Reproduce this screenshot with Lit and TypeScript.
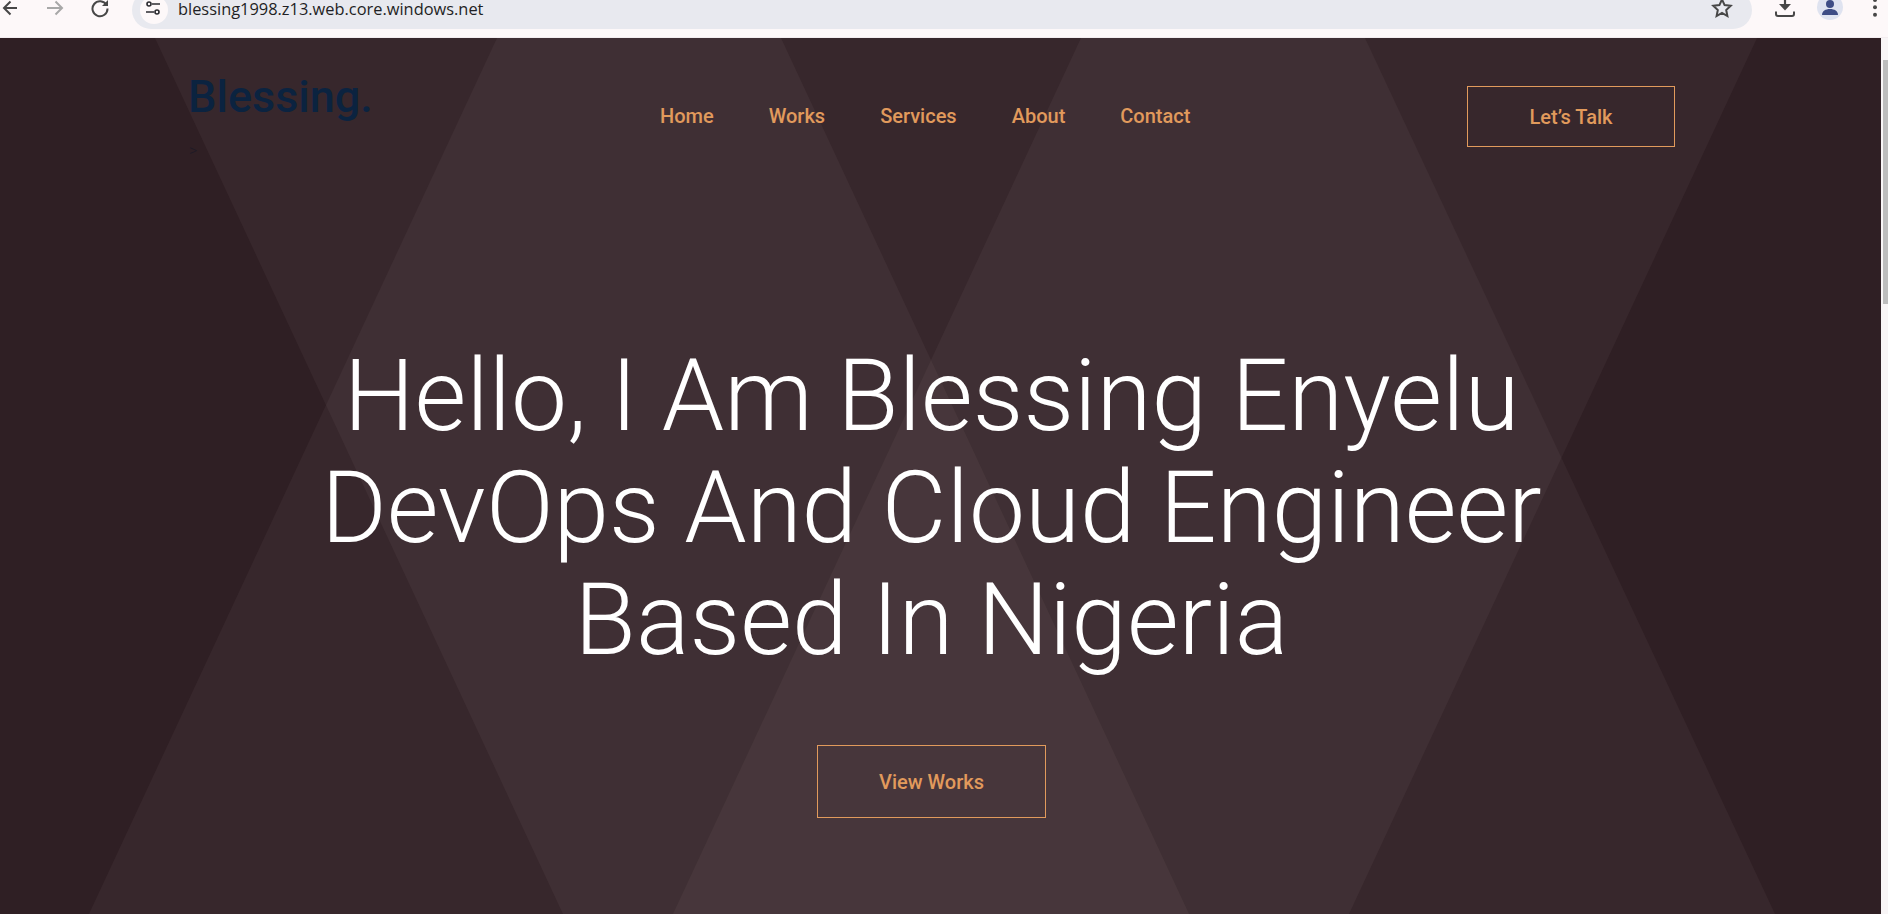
import { LitElement, html, css, svg } from 'lit'
import { customElement } from 'lit/decorators.js'

const NAV = ['Home', 'Works', 'Services', 'About', 'Contact']

@customElement('app-root')
export class AppRoot extends LitElement {
  static styles = css`
    :host {
      display: block;
      height: 914px;
      overflow: hidden;
      font-family: Roboto, 'Liberation Sans', sans-serif;
      background: #fdf8f9;
    }

    /* browser chrome */
    .chrome {
      height: 38px;
      display: flex;
      align-items: flex-start;
      overflow: hidden;
      box-sizing: border-box;
      border-bottom: 1px solid #f3edf0;
    }
    .tool { flex: none; display: block; margin-top: -4px; }
    .tool.forward { margin-left: 23px; }
    .tool.reload { margin-left: 21px; }
    .omnibox {
      flex: none;
      width: 1620px;
      height: 38px;
      margin: -9px 0 0 20px;
      background: #e8e9ef;
      border-radius: 19px;
      display: flex;
      align-items: center;
      padding: 0 18px 0 8px;
      box-sizing: border-box;
    }
    .tune {
      flex: none;
      width: 28px;
      height: 28px;
      border-radius: 50%;
      background: #fdf8f9;
      display: flex;
      align-items: center;
      justify-content: center;
    }
    .tune svg { margin: -4px 2px 0 0; }
    .url {
      margin: -4px 0 0 10px;
      flex: 1;
      font: 16.4px/15px 'Open Sans', sans-serif;
      color: #1f1f24;
    }
    .star { flex: none; margin-top: -4px; }
    .actions { display: flex; align-items: flex-start; }
    .tool.download { margin-left: 21px; }
    .avatar {
      flex: none;
      width: 26px;
      height: 26px;
      margin: -6px 0 0 20px;
      border-radius: 50%;
      background: #dfe3f0;
      display: block;
    }
    .tool.dots { margin: -6px 0 0 29px; }

    /* page */
    .viewport { display: flex; height: 876px; }
    .page {
      position: relative;
      flex: 1;
      min-width: 0;
      background: #2f1f24;
      overflow: hidden;
    }
    .shapes { position: absolute; inset: 0; width: 100%; height: 100%; }
    .shapes polygon { fill: rgba(255, 235, 240, 0.042); }
    .content {
      position: relative;
      padding: 48px 206px 0 189px;
      display: flex;
      flex-direction: column;
    }
    .bar { display: flex; align-items: flex-start; }
    .brand { width: 471px; flex: none; }
    .logo {
      font-size: 45px;
      font-weight: 500;
      line-height: 52px;
      color: #0b2340;
      margin: -15px 0 0 -1px;
    }
    .stray {
      font-size: 16px;
      font-weight: 300;
      line-height: 18px;
      color: #1e1a26;
      margin-top: 19px;
    }
    nav { display: flex; gap: 55px; margin-top: 17px; }
    nav a {
      font-size: 20px;
      font-weight: 500;
      line-height: 26px;
      color: #e19a5c;
    }
    .btn {
      box-sizing: border-box;
      display: flex;
      align-items: center;
      justify-content: center;
      border: 1px solid #e19a5c;
      color: #e19a5c;
      font-size: 20px;
      font-weight: 500;
    }
    .talk { width: 208px; height: 61px; margin-left: auto; }
    .hero {
      display: flex;
      flex-direction: column;
      align-items: center;
      margin-top: 180px;
      padding-right: 1px;
    }
    h1 {
      margin: 0;
      font-size: 100px;
      font-weight: 300;
      line-height: 112px;
      color: #fff;
      text-align: center;
    }
    .view { width: 229px; height: 73px; margin-top: 69px; }

    /* scrollbar */
    .scroll { flex: none; width: 7px; background: #f8f5f6; }
    .thumb { margin: 22px 0 0 2px; height: 244px; background: #bdbdbd; }
  `

  private icon(cls: string, w: number, body: unknown) {
    return html`<svg class="tool ${cls}" width=${w} height="24" viewBox="0 0 ${w} 24" fill="none">${body}</svg>`
  }

  render() {
    return html`
      <div class="chrome">
        ${this.icon('back', 20, svg`<path d="M17 12H4M10.500 5.500 4 12l6.500 6.500" stroke="#474747" stroke-width="2"/>`)}
        ${this.icon('forward', 24, svg`<path d="M4 12h15M12.500 5.500 19 12l-6.500 6.500" stroke="#a8a8a8" stroke-width="2"/>`)}
        ${this.icon('reload', 24, svg`<path d="M18.500 9A7.500 7.500 0 1 0 19.500 12.500" stroke="#474747" stroke-width="2"/><path d="M20 4v6h-6z" fill="#474747"/>`)}
        <div class="omnibox">
          <span class="tune">
            <svg width="16" height="16" viewBox="0 0 16 16" fill="none" stroke="#2b2b30" stroke-width="1.6">
              <circle cx="4" cy="4" r="2"/><path d="M7 4h8M1 12h8"/><circle cx="12" cy="12" r="2"/>
            </svg>
          </span>
          <span class="url">blessing1998.z13.web.core.windows.net</span>
          <svg class="star" width="24" height="24" viewBox="0 0 24 24" fill="none" stroke="#474747" stroke-width="2">
            <path d="m12 3.500 2.600 5.600 6.100.7-4.500 4.200 1.200 6L12 17l-5.400 3 1.200-6-4.500-4.200 6.100-.7z"/>
          </svg>
        </div>
        <div class="actions">
          ${this.icon('download', 24, svg`
            <path d="M12 0v12" stroke="#474747" stroke-width="2.200"/>
            <path d="M6 8h12l-6 6.500z" fill="#474747"/>
            <path d="M3 15.500v2.500a2 2 0 0 0 2 2h14a2 2 0 0 0 2-2v-2.500" stroke="#474747" stroke-width="2"/>`)}
          <svg class="avatar" viewBox="0 0 26 26">
            <circle cx="13" cy="10" r="4" fill="#3f4d85"/>
            <path d="M5 21c0-4 3.500-6 8-6s8 2 8 6z" fill="#3f4d85"/>
          </svg>
          <svg class="tool dots" width="6" height="24" viewBox="0 0 6 24" fill="#474747">
            <circle cx="3" cy="6" r="2"/><circle cx="3" cy="13.300" r="2"/><circle cx="3" cy="20.700" r="2"/>
          </svg>
        </div>
      </div>
      <div class="viewport">
        <main class="page">
          <svg class="shapes" viewBox="0 0 1881 876" preserveAspectRatio="none">
            <polygon points="155,0 781,0 1189,876 563,876" />
            <polygon points="1081,0 1757,0 1349,876 673,876" />
            <polygon points="497,0 1365,0 1775,876 89,876" />
          </svg>
          <div class="content">
            <header class="bar">
              <div class="brand">
                <div class="logo">Blessing.</div>
                <div class="stray">&gt;</div>
              </div>
              <nav>${NAV.map(n => html`<a>${n}</a>`)}</nav>
              <div class="btn talk">Let’s Talk</div>
            </header>
            <section class="hero">
              <h1>Hello, I Am Blessing Enyelu<br />DevOps And Cloud Engineer<br />Based In Nigeria</h1>
              <div class="btn view">View Works</div>
            </section>
          </div>
        </main>
        <div class="scroll"><div class="thumb"></div></div>
      </div>
    `
  }
}
